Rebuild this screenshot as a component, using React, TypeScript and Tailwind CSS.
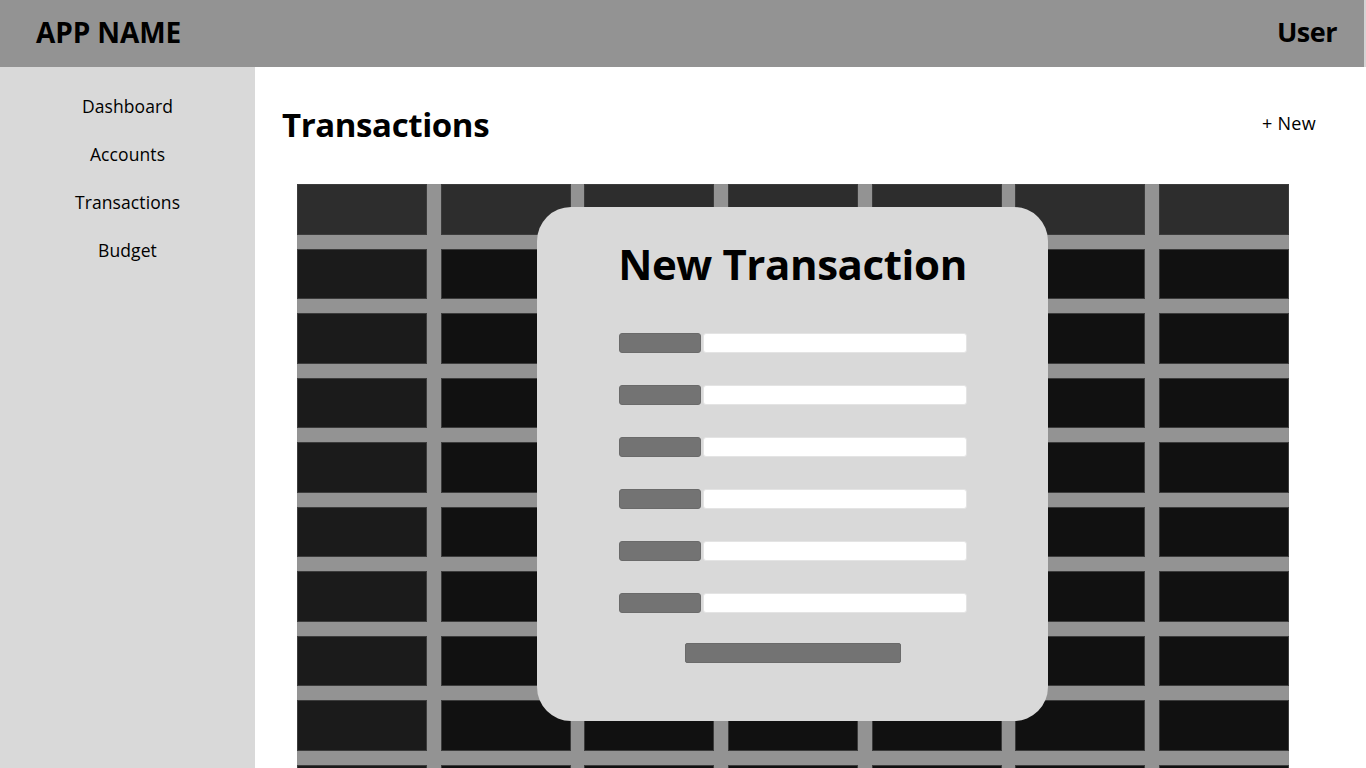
import React from "react";

const rows = 10;
const cols = 7;

export default function App() {
  return (
    <div className="h-[768px] w-[1366px] overflow-hidden flex flex-col bg-white font-['Open_Sans','Liberation_Sans',sans-serif] text-black">
      <header className="h-[67px] shrink-0 bg-[#939393] flex items-center justify-between pl-[36px] pr-[27px] pb-[4px] border-r-2 border-[#d4d4d4]">
        <div className="text-[28px] font-bold leading-none tracking-[-0.1px]">APP NAME</div>
        <div className="text-[27px] font-bold leading-none tracking-[-0.5px]">User</div>
      </header>
      <div className="flex flex-1 min-h-0">
        <aside className="w-[255px] shrink-0 bg-[#d9d9d9] flex flex-col items-center pt-[15px]">
          {["Dashboard", "Accounts", "Transactions", "Budget"].map((t) => (
            <div key={t} className="text-[17.5px] leading-[48px] tracking-[0.1px]">
              {t}
            </div>
          ))}
        </aside>
        <main className="flex-1 relative">
          <div className="flex items-center justify-between pl-[27px] pr-[50px] pt-[38px] h-[78px]">
            <h1 className="text-[33px] font-bold leading-[40px] tracking-[-0.4px]">Transactions</h1>
            <div className="text-[18px] leading-[24px] -mt-[4px] tracking-[0.3px]">+ New</div>
          </div>
          <div className="ml-[42px] mt-[39px] w-[992px] grid grid-cols-7 gap-x-[13.67px] gap-y-[14px] bg-[#939393]">
            {Array.from({ length: rows * cols }).map((_, i) => {
              const r = Math.floor(i / cols);
              const c = i % cols;
              const cls =
                r === 0
                  ? "bg-[#2d2d2d]"
                  : c === 0
                  ? "bg-[#1b1b1b]"
                  : "bg-[#111111]";
              return (
                <div
                  key={i}
                  className={`h-[50.5px] border border-[#3c3c3c] ${cls}`}
                />
              );
            })}
          </div>
          <div className="absolute left-[282px] top-[140px] w-[511px] h-[514px] rounded-[34px] bg-[#d9d9d9] flex flex-col items-center pt-[27px]">
            <h2 className="text-[42px] font-bold leading-[60px] tracking-[-0.4px]">New Transaction</h2>
            <div className="mt-[39px] flex flex-col gap-[32px]">
              {Array.from({ length: 6 }).map((_, i) => (
                <div key={i} className="flex gap-[2px]">
                  <div className="w-[82px] h-[20px] rounded-[3px] bg-[#737373] border border-[#6a6a6a]" />
                  <div className="w-[264px] h-[20px] rounded-[3px] bg-white border border-[#e4e4e4]" />
                </div>
              ))}
            </div>
            <div className="mt-[30px] w-[216px] h-[20px] rounded-[2px] bg-[#737373] border border-[#6a6a6a]" />
          </div>
        </main>
      </div>
    </div>
  );
}
